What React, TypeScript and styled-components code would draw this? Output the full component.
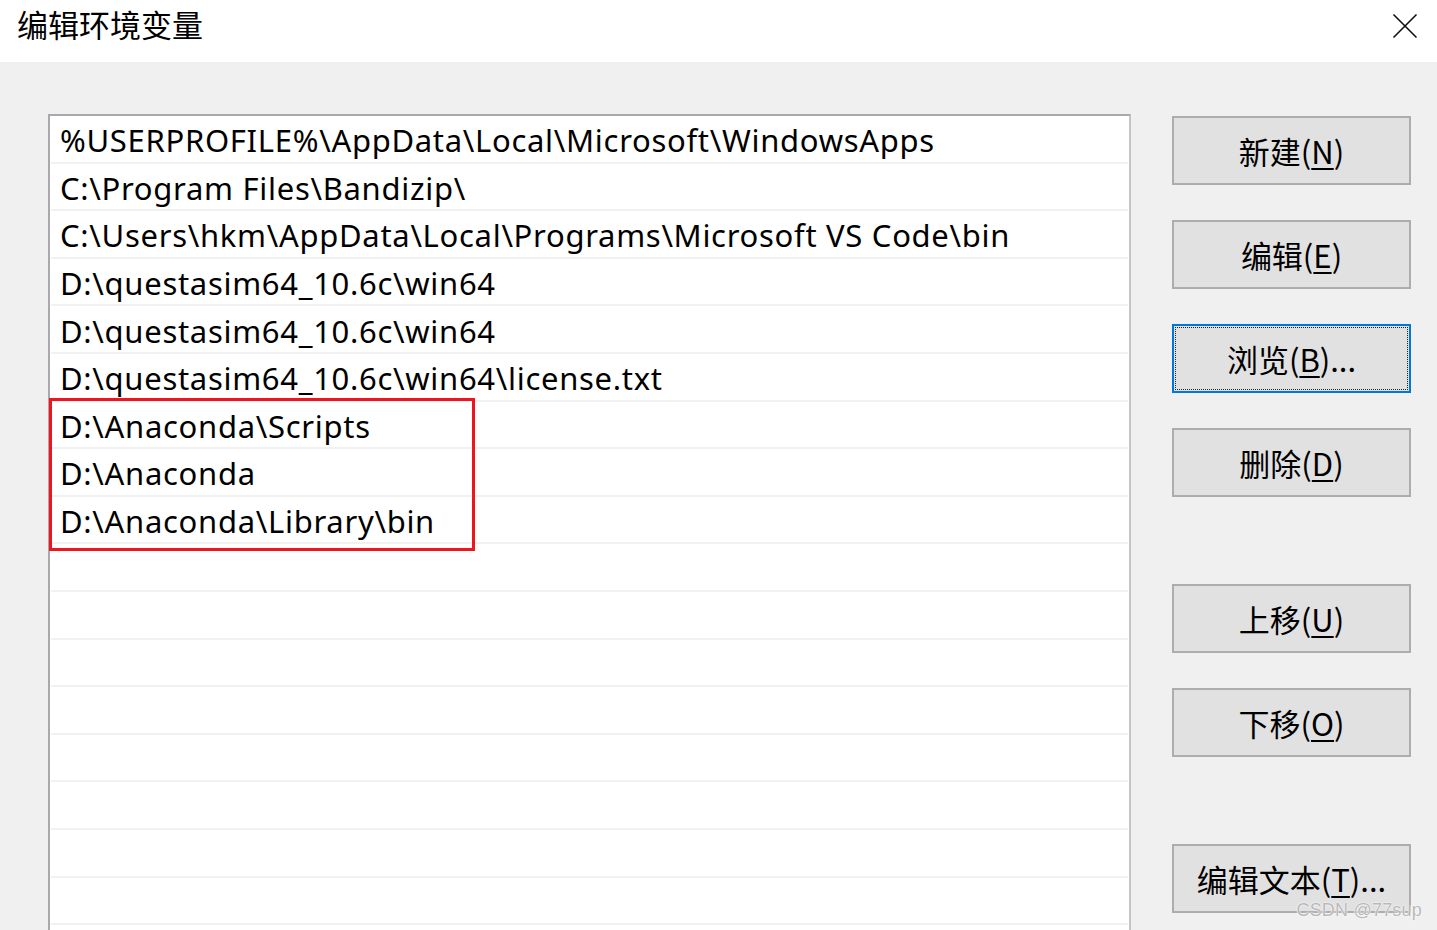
import React from "react";
import styled, { createGlobalStyle } from "styled-components";

const Global = createGlobalStyle`
  html, body { margin: 0; padding: 0; overflow: hidden; background: #f0f0f0; }
  *, *::before, *::after { box-sizing: border-box; }
`;

const FONT = `"Microsoft YaHei UI", "Noto Sans", "Noto Sans CJK SC", sans-serif`;

const Window = styled.div`
  width: 1437px;
  height: 930px;
  display: flex;
  flex-direction: column;
  overflow: hidden;
  font-family: ${FONT};
  color: #000;
  position: relative;
`;

const TitleBar = styled.div`
  height: 62px;
  flex: 0 0 62px;
  background: #fff;
  display: flex;
  align-items: flex-start;
  justify-content: space-between;
  padding: 4px 0 0 17px;
`;

const Title = styled.div`
  font-family: "Noto Sans CJK SC", sans-serif;
  font-size: 31px;
  line-height: 40px;
  color: #000;
`;

const Close = styled.div`
  width: 40px;
  height: 40px;
  margin: 2px 12px 0 0;
  display: flex;
  align-items: center;
  justify-content: center;
`;

const Body = styled.div`
  flex: 1;
  display: flex;
  align-items: flex-start;
  padding: 52px 0 0 48px;
  background: #f0f0f0;
`;

const ListBox = styled.div`
  width: 1083px;
  height: 900px;
  background: #fff;
  border: 2px solid #a9a9ad;
  border-right-color: #c4c4c4;
  padding: 0 1px;
  display: flex;
  flex-direction: column;
`;

const Row = styled.div`
  height: 47.6px;
  flex: 0 0 47.6px;
  border-bottom: 2px solid #f1f1f1;
  padding: 3px 0 0 9px;
  display: flex;
  align-items: center;
  font-size: 31px;
  white-space: nowrap;
  letter-spacing: 0.7px;
`;

const Highlight = styled.div`
  position: relative;
  display: flex;
  flex-direction: column;
  &::after {
    content: "";
    position: absolute;
    top: -4px;
    left: -2px;
    width: 426px;
    height: 153px;
    border: 3px solid #f0141e;
    pointer-events: none;
  }
`;

const ButtonCol = styled.div`
  margin-left: 41px;
  width: 239px;
  display: flex;
  flex-direction: column;
  gap: 35px;
  padding-top: 2px;
`;

const Spacer = styled.div<{ h: number }>`
  height: ${(p) => p.h}px;
`;

const Button = styled.div<{ focused?: boolean }>`
  height: 69px;
  background: #e1e1e1;
  border: 2px solid ${(p) => (p.focused ? "#0078d7" : "#adadad")};
  display: flex;
  align-items: center;
  justify-content: center;
  font-family: "Noto Sans CJK SC", sans-serif;
  font-size: 31px;
  position: relative;
  ${(p) =>
    p.focused &&
    `&::before {
      content: "";
      position: absolute;
      inset: 1px;
      border: 1px dotted #222;
    }`}
`;

const Key = styled.span`
  text-decoration: underline;
  text-underline-offset: 4px;
  text-decoration-thickness: 2px;
`;

const Watermark = styled.div`
  position: absolute;
  right: 15px;
  bottom: 9px;
  font-family: "Liberation Sans", Arial, sans-serif;
  font-size: 18px;
  color: #b8b8b8;
  text-shadow: 0 0 1px #fff, 0 0 2px #fff;
  letter-spacing: 0.2px;
`;

const paths = [
  "%USERPROFILE%\\AppData\\Local\\Microsoft\\WindowsApps",
  "C:\\Program Files\\Bandizip\\",
  "C:\\Users\\hkm\\AppData\\Local\\Programs\\Microsoft VS Code\\bin",
  "D:\\questasim64_10.6c\\win64",
  "D:\\questasim64_10.6c\\win64",
  "D:\\questasim64_10.6c\\win64\\license.txt",
];
const marked = ["D:\\Anaconda\\Scripts", "D:\\Anaconda", "D:\\Anaconda\\Library\\bin"];
const emptyRows = 9;

const buttons: { label: string; key: string; tail: string; focused?: boolean; extraGap?: boolean }[] = [
  { label: "新建(", key: "N", tail: ")" },
  { label: "编辑(", key: "E", tail: ")" },
  { label: "浏览(", key: "B", tail: ")...", focused: true },
  { label: "删除(", key: "D", tail: ")" },
  { label: "上移(", key: "U", tail: ")", extraGap: true },
  { label: "下移(", key: "O", tail: ")" },
  { label: "编辑文本(", key: "T", tail: ")...", extraGap: true },
];

export default function App() {
  return (
    <Window>
      <Global />
      <TitleBar>
        <Title>编辑环境变量</Title>
        <Close>
          <svg width="26" height="26" viewBox="0 0 26 26">
            <path d="M1.5 1.5 L24.5 24.5 M24.5 1.5 L1.5 24.5" stroke="#111" strokeWidth="1.6" fill="none" />
          </svg>
        </Close>
      </TitleBar>
      <Body>
        <ListBox>
          {paths.map((p, i) => (
            <Row key={i}>{p}</Row>
          ))}
          <Highlight>
            {marked.map((p, i) => (
              <Row key={i}>{p}</Row>
            ))}
          </Highlight>
          {Array.from({ length: emptyRows }).map((_, i) => (
            <Row key={"e" + i} />
          ))}
        </ListBox>
        <ButtonCol>
          {buttons.map((b, i) => (
            <React.Fragment key={i}>
              {b.extraGap ? <Spacer h={17} /> : null}
              <Button focused={b.focused}>
                {b.label}
                <Key>{b.key}</Key>
                {b.tail}
              </Button>
            </React.Fragment>
          ))}
        </ButtonCol>
      </Body>
      <Watermark>CSDN @77sup</Watermark>
    </Window>
  );
}
